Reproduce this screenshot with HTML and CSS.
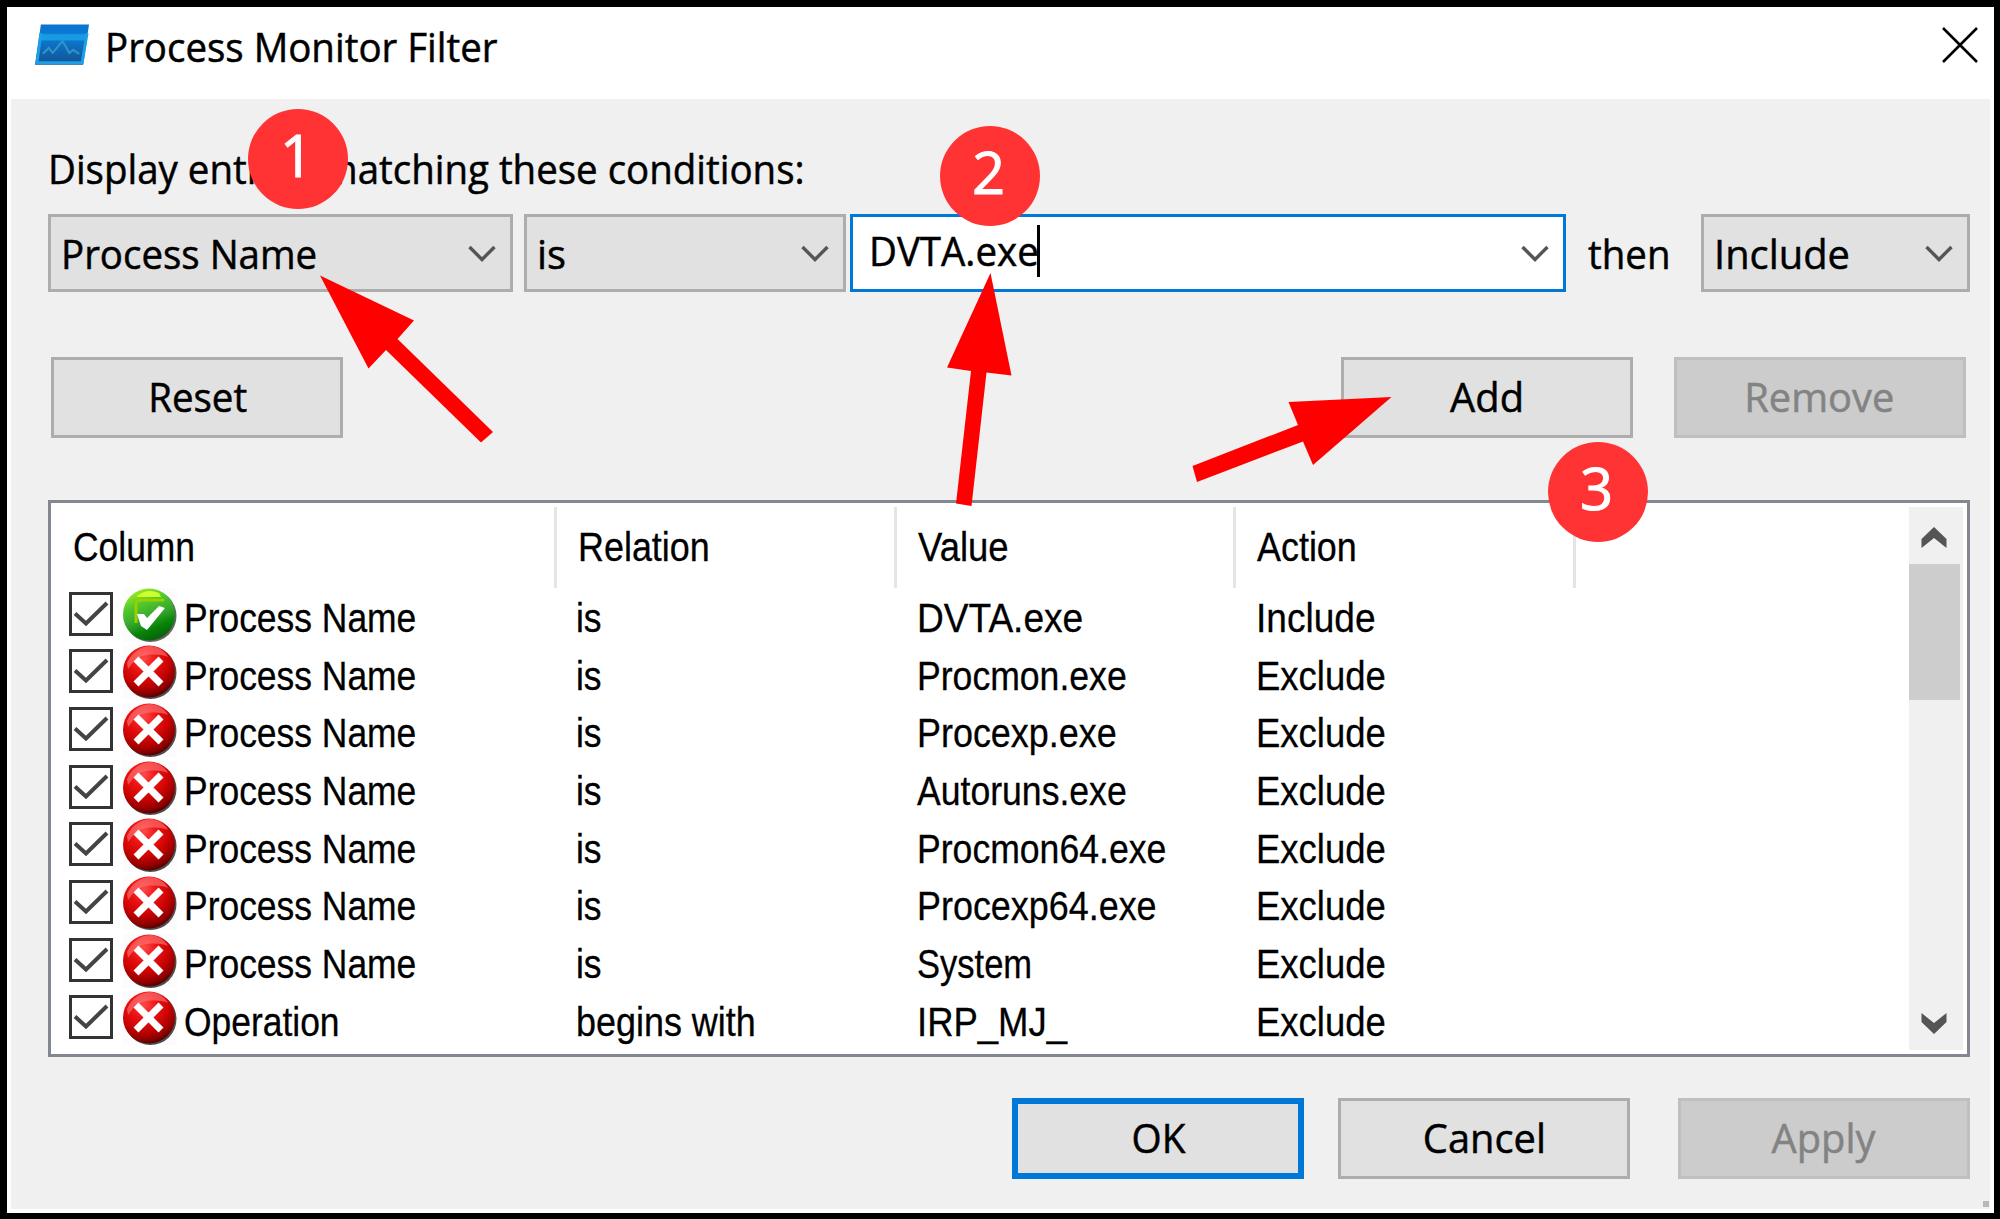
FILE: index.html
```
<!DOCTYPE html>
<html lang="en">
<head>
<meta charset="utf-8">
<title>Process Monitor Filter</title>
<link rel="stylesheet" href="styles.css">
</head>
<body>
<svg class="defs" aria-hidden="true">
  <defs>
    <linearGradient id="app-fill" x1="0" y1="0" x2="0" y2="1">
      <stop offset="0" stop-color="#0874cf"/><stop offset=".22" stop-color="#0a78d4"/>
      <stop offset=".26" stop-color="#189be3"/><stop offset=".38" stop-color="#189be3"/>
      <stop offset=".42" stop-color="#0c75cc"/><stop offset="1" stop-color="#14508f"/>
    </linearGradient>
    <linearGradient id="green" x1=".3" y1="0" x2=".7" y2="1">
      <stop offset="0" stop-color="#a4ea20"/><stop offset=".25" stop-color="#55cc2c"/>
      <stop offset=".55" stop-color="#35a52c"/><stop offset=".75" stop-color="#078407"/><stop offset="1" stop-color="#0a5a0a"/>
    </linearGradient>
    <radialGradient id="red" cx=".4" cy=".25" r=".8">
      <stop offset="0" stop-color="#ff4a4a"/><stop offset=".3" stop-color="#ee1414"/>
      <stop offset=".6" stop-color="#cc0303"/><stop offset=".85" stop-color="#8c0000"/><stop offset="1" stop-color="#3a0000"/>
    </radialGradient>
    <symbol id="box" viewBox="0 0 44 44">
      <rect x="1.5" y="1.5" width="41" height="41" fill="#fff" stroke="#333" stroke-width="3"/>
      <path d="M6 21.5 L17 31.5 L38 11" fill="none" stroke="#444" stroke-width="4"/>
    </symbol>
    <symbol id="include" viewBox="0 0 54 54">
      <rect width="54" height="54" fill="#fcfcfc"/>
      <circle cx="27.5" cy="28" r="26" fill="#333" opacity=".75"/>
      <circle cx="26" cy="26.5" r="26" fill="url(#green)"/>
      <path d="M14 8 Q24 0 36 5 L38 9 H14 Z" fill="#ccff2c"/>
      <path d="M13 35 V15 Q14 12 18 12 H41" fill="none" stroke="#98d000" stroke-width="3"/>
      <path d="M14 26 L21 26 L24 30 L36 18 L42 20 L24 42 L18 38 Z" fill="#fff"/>
    </symbol>
    <symbol id="exclude" viewBox="0 0 54 54">
      <rect width="54" height="54" fill="#fcfcfc"/>
      <circle cx="27.5" cy="28" r="26" fill="#222" opacity=".8"/>
      <circle cx="26" cy="26.5" r="26" fill="url(#red)"/>
      <path d="M4 18 C10 5 20 1 28 1 C36 2 42 6 45 12 C34 8 20 9 12 15 Q8 20 5 24 Z" fill="#ff7a7a" opacity=".6"/>
      <path d="M13 14 L38 39 M38 14 L13 39" stroke="#fff" stroke-width="7"/>
    </symbol>
    <symbol id="chevron" viewBox="0 0 28 18">
      <path d="M1.5 2 L14 14.5 L26.500 2" fill="none" stroke="#555" stroke-width="3.4"/>
    </symbol>
  </defs>
</svg>

<main class="dialog">
  <header class="titlebar">
    <svg class="app-icon" viewBox="0 0 56 42">
      <path d="M6 0 H55 L49 41 H0 Z" fill="url(#app-fill)"/>
      <path d="M6 9 L2 39 H48 L53 9" fill="none" stroke="#1c9fe6" stroke-width="3"/>
      <path d="M8 30 L14 24 L18 29 L28 17 L35 29 L39 26 L45 30" fill="none" stroke="#3092c8" stroke-width="2.200"/>
    </svg>
    <h1 class="title"><span class="fit">Process Monitor Filter</span></h1>
    <svg class="close" viewBox="0 0 36 36"><path d="M1 1 L35 35 M35 1 L1 35" stroke="#000" stroke-width="2.600"/></svg>
  </header>

  <section class="client">
    <p class="label"><span class="fit">Display entries matching these conditions:</span></p>

    <div class="conditions">
      <div class="combo combo-column"><span class="fit">Process Name</span><svg class="arrow"><use href="#chevron"/></svg></div>
      <div class="combo combo-relation"><span class="fit w98">is</span><svg class="arrow"><use href="#chevron"/></svg></div>
      <div class="combo combo-value"><span class="fit">DVTA.exe</span><i class="caret"></i><svg class="arrow"><use href="#chevron"/></svg></div>
      <span class="then"><span class="fit">then</span></span>
      <div class="combo combo-action"><span class="fit w98">Include</span><svg class="arrow"><use href="#chevron"/></svg></div>
    </div>

    <div class="actions">
      <button class="button reset"><span class="mid">Reset</span></button>
      <button class="button add"><span class="mid w98">Add</span></button>
      <button class="button" disabled><span class="mid w98">Remove</span></button>
    </div>

    <div class="list">
      <div class="table">
        <div class="head">
          <span class="th"><span class="fit w86">Column</span></span>
          <span class="th"><span class="fit">Relation</span></span>
          <span class="th"><span class="fit w89">Value</span></span>
          <span class="th"><span class="fit">Action</span></span>
        </div>
        <div class="row"><span class="cell"><svg class="check"><use href="#box"/></svg><svg class="state"><use href="#include"/></svg><span class="fit w86">Process Name</span></span><span class="cell"><span class="fit w86">is</span></span><span class="cell"><span class="fit w90">DVTA.exe</span></span><span class="cell"><span class="fit w90">Include</span></span></div>
        <div class="row"><span class="cell"><svg class="check"><use href="#box"/></svg><svg class="state"><use href="#exclude"/></svg><span class="fit w86">Process Name</span></span><span class="cell"><span class="fit w86">is</span></span><span class="cell"><span class="fit w87">Procmon.exe</span></span><span class="cell"><span class="fit w89">Exclude</span></span></div>
        <div class="row"><span class="cell"><svg class="check"><use href="#box"/></svg><svg class="state"><use href="#exclude"/></svg><span class="fit w86">Process Name</span></span><span class="cell"><span class="fit w86">is</span></span><span class="cell"><span class="fit">Procexp.exe</span></span><span class="cell"><span class="fit w89">Exclude</span></span></div>
        <div class="row"><span class="cell"><svg class="check"><use href="#box"/></svg><svg class="state"><use href="#exclude"/></svg><span class="fit w86">Process Name</span></span><span class="cell"><span class="fit w86">is</span></span><span class="cell"><span class="fit w87">Autoruns.exe</span></span><span class="cell"><span class="fit w89">Exclude</span></span></div>
        <div class="row"><span class="cell"><svg class="check"><use href="#box"/></svg><svg class="state"><use href="#exclude"/></svg><span class="fit w86">Process Name</span></span><span class="cell"><span class="fit w86">is</span></span><span class="cell"><span class="fit w87">Procmon64.exe</span></span><span class="cell"><span class="fit w89">Exclude</span></span></div>
        <div class="row"><span class="cell"><svg class="check"><use href="#box"/></svg><svg class="state"><use href="#exclude"/></svg><span class="fit w86">Process Name</span></span><span class="cell"><span class="fit w86">is</span></span><span class="cell"><span class="fit">Procexp64.exe</span></span><span class="cell"><span class="fit w89">Exclude</span></span></div>
        <div class="row"><span class="cell"><svg class="check"><use href="#box"/></svg><svg class="state"><use href="#exclude"/></svg><span class="fit w86">Process Name</span></span><span class="cell"><span class="fit w86">is</span></span><span class="cell"><span class="fit w84">System</span></span><span class="cell"><span class="fit w89">Exclude</span></span></div>
        <div class="row"><span class="cell"><svg class="check"><use href="#box"/></svg><svg class="state"><use href="#exclude"/></svg><span class="fit w86">Operation</span></span><span class="cell"><span class="fit">begins with</span></span><span class="cell"><span class="fit w89">IRP_MJ_</span></span><span class="cell"><span class="fit w89">Exclude</span></span></div>
      </div>
      <div class="scrollbar">
        <svg class="scroll-arrow" viewBox="0 0 26 22"><path d="M.5 12 L13 0 L25.500 12 V21 L13 11 L.5 21 Z" fill="#555"/></svg>
        <div class="thumb"></div>
        <svg class="scroll-arrow down" viewBox="0 0 26 22"><path d="M.5 10 L13 22 L25.500 10 V1 L13 11 L.5 1 Z" fill="#555"/></svg>
      </div>
    </div>

    <footer class="footer">
      <button class="button default"><span class="mid w95">OK</span></button>
      <button class="button cancel"><span class="mid w98">Cancel</span></button>
      <button class="button" disabled><span class="mid w98">Apply</span></button>
    </footer>
    <i class="grip"></i>
  </section>
</main>

<svg class="arrows" viewBox="0 0 2000 1219" fill="#f00">
  <path d="M320 275.500 L414 320.500 L397.500 339 L493 432 L481 442.500 L386 350 L368.500 368.500 Z"/>
  <path d="M990.500 273 L1011.500 375.500 L986.500 372.500 L971.500 506 L956 503.500 L971 371 L947 367.500 Z"/>
  <path d="M1391.500 397 L1313 465 L1303 441.500 L1197 482 L1192.500 466 L1298 425 L1288.500 402 Z"/>
</svg>
<span class="badge one">1</span>
<span class="badge two">2</span>
<span class="badge three">3</span>
</body>
</html>
```
FILE: styles.css
```
* { box-sizing: border-box; }

body {
  margin: 0;
  width: 2000px;
  height: 1219px;
  overflow: hidden;
  position: relative;
  display: flex;
  padding: 7px 6px 6px 7px;
  background: #000;
  color: #000;
  font: 41px/60px "Open Sans", "Noto Sans", sans-serif;
}

.defs { position: absolute; width: 0; height: 0; }

.dialog {
  flex: 1;
  display: flex;
  flex-direction: column;
  padding: 0 4px 4px;
  background: #fff;
}

.fit, .mid { display: inline-block; white-space: nowrap; transform: scaleX(.938); -webkit-text-stroke: .5px currentColor; }
.fit { transform-origin: 0 50%; }
.fit.w95, .mid.w95 { transform: scaleX(.945); }
.fit.w98, .mid.w98 { transform: scaleX(.972); }

.titlebar {
  flex: none;
  height: 92px;
  display: flex;
  align-items: flex-start;
  padding: 9px 12px 0 24px;
}
.app-icon { width: 55px; height: 42px; margin-top: 8px; }
.title { flex: 1; margin: 0 0 0 15px; font: inherit; }
.close { width: 36px; height: 36px; margin-top: 11px; }

.client {
  flex: 1;
  position: relative;
  padding: 39px 20px 0 37px;
  background: #f0f0f0;
}
.label { margin: 0; }

.conditions { display: flex; height: 78px; margin-top: 16px; }
.combo {
  display: flex;
  align-items: center;
  padding: 0 14px 0 10px;
  border: 3px solid #adadad;
  background: #e1e1e1;
}
.combo .arrow { width: 28px; height: 18px; margin: 2px 0 0 auto; }
.combo-column { width: 465px; }
.combo-relation { width: 322px; margin-left: 11px; }
.combo-value { width: 716px; margin-left: 4px; border-color: #0078d7; background: #fff; padding-left: 16px; }
.combo-value .fit { width: 168px; margin-top: -6px; }
.combo-value .caret { width: 3px; height: 52px; margin: -4px 0 0; background: #000; }
.then { width: 135px; padding: 9px 0 0 22px; }
.combo-action { width: 269px; }

.actions { display: flex; height: 81px; margin: 65px 4px 0 3px; }
.button {
  width: 292px;
  padding: 0 0 3px;
  border: 3px solid #adadad;
  border-radius: 0;
  background: #e1e1e1;
  color: #000;
  font: inherit;
  line-height: 60px;
}
.button:disabled { border-color: #bfbfbf; background: #ccc; color: #838383; }
.button:disabled .mid { position: relative; left: -1px; }
.reset .mid { padding-left: 2px; }
.add { margin: 0 41px 0 auto; }

.list {
  display: flex;
  height: 557px;
  margin-top: 62px;
  padding: 4px;
  border: 3px solid #828790;
  background: #fff;
  font-family: "Liberation Sans", Arial, sans-serif;
}
.list .fit { transform: scaleX(.876); -webkit-text-stroke-width: .3px; }
.list .fit.w84 { transform: scaleX(.842); }
.list .fit.w86 { transform: scaleX(.864); }
.list .fit.w87 { transform: scaleX(.868); }
.list .fit.w89 { transform: scaleX(.89); }
.list .fit.w90 { transform: scaleX(.904); }
.table { flex: 1; }
.head, .row { display: grid; grid-template-columns: 502px 340px 339px 340px; }
.head { height: 81px; }
.th { padding: 10px 0 0 21px; border-right: 3px solid #e5e5e5; }
.th:first-child { padding-left: 18px; }
.row { height: 57.7px; line-height: 60px; }
.cell { display: flex; align-items: center; height: 60px; padding-left: 19px; }
.cell:nth-child(n+3) { padding-left: 20px; }
.cell:first-child { padding-left: 13.5px; }
.check { width: 44px; height: 44px; margin-bottom: 9px; }
.state { width: 54px; height: 54px; margin: 0 7.5px 7px 10px; }

.scrollbar {
  width: 54px;
  display: flex;
  flex-direction: column;
  align-items: flex-start;
  background: #f0f0f0;
}
.scroll-arrow { flex: none; width: 26px; height: 22px; margin: 20px 0 15px 12px; }
.thumb { width: 51px; height: 136px; background: #cdcdcd; }
.scroll-arrow.down { margin: auto 0 16px 12px; }

.footer { display: flex; justify-content: flex-end; height: 81px; margin-top: 41px; }
.footer .button { padding-bottom: 4px; }
.footer .default { border: 6px solid #0078d7; }
.cancel { margin: 0 48px 0 34px; }

.grip { position: absolute; right: 1px; bottom: 2px; width: 6px; height: 6px; background: #b8b8b8; }

/* Tutorial call-outs drawn over the dialog */
.arrows { position: absolute; left: 0; top: 0; width: 2000px; height: 1219px; }
.badge {
  position: absolute;
  width: 100px;
  height: 100px;
  border-radius: 50%;
  background: #f33;
  color: #fff;
  font: 58px/92px "Open Sans", sans-serif;
  text-align: center;
  text-indent: -3px;
  -webkit-text-stroke: 1px #fff;
}
.one { left: 248px; top: 109px; }
.two { left: 940px; top: 126px; }
.three { left: 1548px; top: 442px; }
```
